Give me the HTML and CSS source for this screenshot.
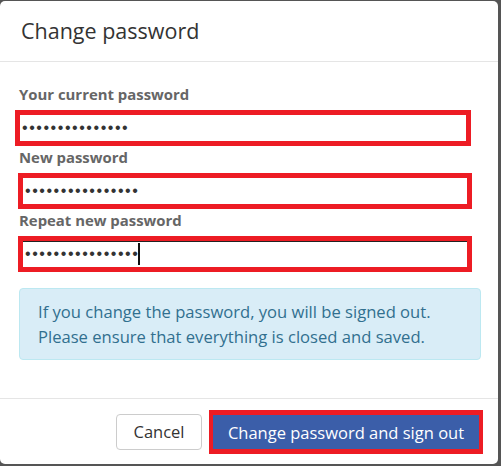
FILE: index.html
```html
<!DOCTYPE html>
<html>
<head>
<meta charset="utf-8">
<link rel="stylesheet" href="styles.css">
</head>
<body>
<div class="modal">
  <div class="modal-header">
    <h4 class="modal-title">Change password</h4>
  </div>
  <div class="modal-body">
    <label class="field-label">Your current password</label>
    <div class="field field-first"><span class="dots">•••••••••••••••</span></div>
    <label class="field-label">New password</label>
    <div class="field"><span class="dots">••••••••••••••••</span></div>
    <label class="field-label">Repeat new password</label>
    <div class="field field-focus"><span class="dots">••••••••••••••••</span><span class="caret"></span></div>
    <div class="alert">If you change the password, you will be signed out.<br>Please ensure that everything is closed and saved.</div>
  </div>
  <div class="modal-footer">
    <button class="btn btn-default">Cancel</button>
    <button class="btn btn-primary">Change password and sign out</button>
  </div>
</div>
</body>
</html>
```

FILE: styles.css
```css
html, body {
  margin: 0;
  padding: 0;
}
body {
  background: #555555;
  width: 501px;
  height: 466px;
  overflow: hidden;
  font-family: "Open Sans", "Noto Sans", sans-serif;
}
.modal {
  width: 498px;
  height: 463px;
  margin-top: 1px;
  background: #ffffff;
  border-radius: 5px;
  display: flex;
  flex-direction: column;
  box-sizing: border-box;
}
.modal-header {
  height: 61px;
  box-sizing: border-box;
  border-bottom: 1px solid #e5e5e5;
  display: flex;
  align-items: center;
  padding-left: 21px;
}
.modal-title {
  margin: 0;
  font-size: 21.5px;
  font-weight: 400;
  color: #333333;
  line-height: 28px;
}
.modal-body {
  flex: 1;
  padding-top: 22px;
  display: flex;
  flex-direction: column;
}
.field-label {
  display: block;
  margin-left: 19px;
  font-size: 14.9px;
  font-weight: 700;
  color: #666666;
  line-height: 20px;
  height: 20px;
  margin-bottom: 6px;
}
.field {
  box-sizing: border-box;
  width: 454px;
  height: 36px;
  margin-left: 18px;
  margin-bottom: 1px;
  border: 5px solid #ed1c24;
  background: #ffffff;
  display: flex;
  align-items: center;
  padding-left: 2px;
}
.field-first {
  margin-left: 15px;
  width: 456px;
}
.field-focus {
  box-shadow: inset 0 1px 0 #222222;
}
.dots {
  font-family: "Liberation Sans", Arial, sans-serif;
  font-size: 16px;
  letter-spacing: 1.55px;
  color: #333333;
  line-height: 20px;
}
.caret {
  width: 2px;
  height: 22px;
  background: #111111;
  margin-left: -1px;
}
.alert {
  margin: 15px 17px 0 19px;
  padding: 10px 18px;
  border: 1px solid #bce8f1;
  background: #d9edf7;
  color: #31708f;
  border-radius: 4px;
  font-size: 16.6px;
  line-height: 25px;
}
.modal-footer {
  height: 66px;
  box-sizing: border-box;
  border-top: 1px solid #e5e5e5;
  display: flex;
  align-items: center;
  justify-content: flex-end;
  padding-right: 15px;
  gap: 7px;
}
.btn {
  font-family: "Open Sans", "Noto Sans", sans-serif;
  font-size: 16.5px;
  margin: 0;
  box-sizing: border-box;
  cursor: pointer;
}
.btn-default {
  height: 36px;
  width: 86px;
  background: #ffffff;
  border: 1px solid #cccccc;
  border-radius: 4px;
  color: #333333;
  padding: 0;
}
.btn-primary {
  height: 44px;
  width: 274px;
  background: #3b5ea9;
  border: 4px solid #ed1c24;
  border-top-width: 5px;
  border-bottom-width: 5px;
  color: #ffffff;
  padding: 0;
  margin-top: 1px;
}
```
